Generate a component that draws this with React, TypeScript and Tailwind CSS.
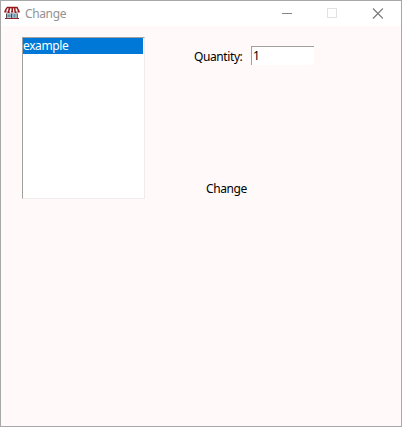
import React from "react";

function StoreIcon() {
  return (
    <svg width="16" height="14" viewBox="0 0 16 14">
      <path d="M3 6.5h10.5V12H3z" fill="#b4c9d2" />
      <path d="M3.5 8.5h3V11h-3zM9.5 8h2v3.5h-2z" fill="#6397ae" />
      <path d="M2 7.5h1V12H2zM7 7.5h1.2V12H7zM12.8 7.5h1V12h-1z" fill="#59484d" />
      <path
        d="M3 1.5h10.5M3 1.5L.8 6M5.7 1.5L4.2 6.7M8.2 1.5v4.3M10.5 1.5L11.3 6.5M13 1.5L15.2 6M.3 5.6h2.2M3.4 6.2h2.3M7.1 5.8h2.1M10.6 6.2h2M13.5 5.6h2.2"
        fill="none"
        stroke="#96191e"
        strokeWidth="1.55"
      />
      <path d="M1 12.5h14" stroke="#8e272b" />
    </svg>
  );
}

function TitleBar() {
  return (
    <header className="flex h-[25px] items-start justify-between bg-white pl-[3px] pr-[18px]">
      <div className="flex items-start gap-[5px] pt-[5px]">
        <StoreIcon />
        <span className="text-[12px] leading-[16px] tracking-[-0.38px] text-[#929292]">Change</span>
      </div>
      <div className="flex items-start gap-[35px] pt-[7px]">
        <svg width="11" height="11" viewBox="0 0 11 11" fill="none">
          <path d="M1 5.5h10" stroke="#858585" />
        </svg>
        <svg width="10" height="10" viewBox="0 0 10 10" fill="none">
          <rect x="0.5" y="0.5" width="9" height="9" stroke="#e2e2e2" />
        </svg>
        <svg width="11" height="11" viewBox="0 0 11 11" fill="none">
          <path d="M1 0.5l10 10M11 0.5l-10 10" stroke="#777777" strokeWidth="1.15" />
        </svg>
      </div>
    </header>
  );
}

export default function App() {
  return (
    <div className="flex h-[427px] w-[402px] flex-col border border-[#a8a8a8] bg-[#fff9f9] font-['Noto_Sans','Open_Sans',sans-serif] text-[12px] leading-[16px] text-black">
      <TitleBar />
      <main className="flex items-start pl-[21px] pt-[11px]">
        <ul className="h-[162px] w-[123px] border border-b-[#eeecec] border-l-[#a0a0a0] border-r-[#eeecec] border-t-[#a0a0a0] bg-white pr-px">
          <li className="h-4 bg-[#0078d7] leading-[16px] tracking-[-0.4px] text-white">example</li>
        </ul>
        <div className="ml-[49px] flex flex-col items-start pt-[9px]">
          <label className="flex items-start gap-[8px]">
            <span className="w-[49px] whitespace-nowrap pt-[3px] tracking-[-0.4px]">Quantity:</span>
            <input
              type="text"
              defaultValue="1"
              className="h-[19px] w-[63px] border-l border-t border-[#a0a0a0] bg-white pb-px pl-px leading-[16px] outline-none"
            />
          </label>
          <button type="button" className="ml-[12px] mt-[116px] tracking-[-0.4px]">
            Change
          </button>
        </div>
      </main>
    </div>
  );
}
